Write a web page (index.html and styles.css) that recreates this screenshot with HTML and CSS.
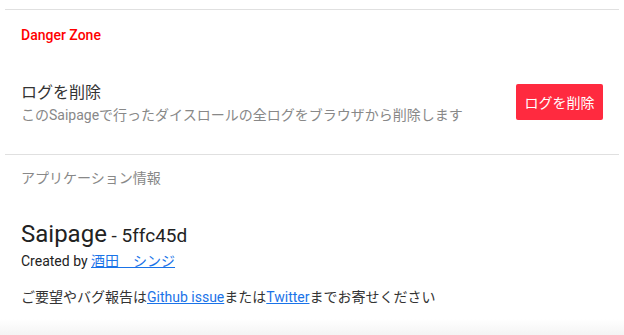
FILE: index.html
```html
<!DOCTYPE html>
<html lang="ja">
<head>
<meta charset="utf-8">
<link rel="stylesheet" href="styles.css">
</head>
<body>
<div class="page">
  <section class="section danger">
    <h2 class="danger-title">Danger Zone</h2>
    <div class="row">
      <div class="row-text">
        <div class="row-title">ログを削除</div>
        <div class="row-sub">このSaipageで行ったダイスロールの全ログをブラウザから削除します</div>
      </div>
      <button class="btn-danger">ログを削除</button>
    </div>
  </section>
  <section class="section info">
    <h2 class="info-title">アプリケーション情報</h2>
    <div class="app-name">Saipage<span class="app-ver"> - 5ffc45d</span></div>
    <div class="created">Created by <a href="#" class="link">酒田　シンジ</a></div>
    <p class="feedback">ご要望やバグ報告は<a href="#" class="link">Github issue</a>または<a href="#" class="link">Twitter</a>までお寄せください</p>
  </section>
  <div class="fade"></div>
</div>
</body>
</html>
```
FILE: styles.css
```css
html, body {
  margin: 0;
  padding: 0;
  background: #fff;
}
body {
  font-family: Roboto, "Noto Sans CJK JP", sans-serif;
  color: #333;
  height: 335px;
  overflow: hidden;
  position: relative;
}
.page {
  padding: 9px 5px 0;
}
.section {
  border-top: 1px solid #e0e0e0;
  padding: 0 16px;
}
.danger-title {
  margin: 0;
  padding-top: 15px;
  font-size: 14px;
  font-weight: 500;
  line-height: 20px;
  color: #ff0000;
}
.row {
  display: flex;
  align-items: center;
  justify-content: space-between;
  padding: 36px 0 29px;
}
.row-title {
  font-size: 16px;
  line-height: 24px;
  color: #333;
}
.row-sub {
  font-size: 14px;
  line-height: 20px;
  color: #888;
}
.btn-danger {
  background: #ff2a3f;
  color: #fff;
  border: none;
  border-radius: 2px;
  font-family: inherit;
  font-size: 14px;
  height: 36px;
  width: 87px;
  padding: 0;
  margin-top: -2px;
}
.info-title {
  margin: 0;
  padding-top: 13px;
  font-size: 14px;
  font-weight: 400;
  line-height: 20px;
  color: #888;
}
.app-name {
  margin-top: 31px;
  font-size: 24px;
  line-height: 30px;
  color: #222;
}
.app-ver {
  font-size: 19px;
}
.created {
  font-size: 14px;
  line-height: 20px;
  color: #222;
}
.link {
  color: #1a73e8;
  text-decoration: underline;
}
.feedback {
  margin: 16px 0 0;
  font-size: 14px;
  line-height: 20px;
  color: #333;
}
.fade {
  position: absolute;
  left: 0;
  right: 0;
  bottom: 0;
  height: 16px;
  background: linear-gradient(#fff, #f4f4f4);
}
```
